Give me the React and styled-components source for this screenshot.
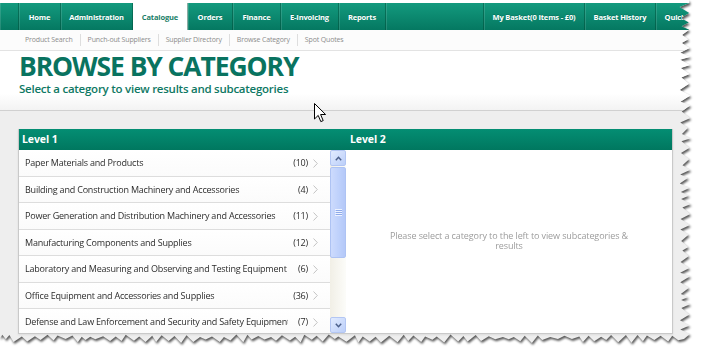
import React from 'react';
import styled, { createGlobalStyle } from 'styled-components';

const GlobalStyle = createGlobalStyle`
  html, body { margin: 0; padding: 0; background: #fff; overflow: hidden; }
  body { font-family: "Open Sans", "Noto Sans", sans-serif; }
  * { box-sizing: border-box; }
`;

function rng(seed) {
  let s = seed;
  return () => {
    s = (s * 16807) % 2147483647;
    return (s - 1) / 2147483646;
  };
}

const tornPath = (() => {
  const r = rng(11);
  const pts = ['0px 0px', '689px 0px'];
  let y = 0;
  let up = false;
  while (y < 330) {
    y += 3 + r() * 3.5;
    up = !up;
    const x = up ? 688 + r() * 3 : 679.5 + r() * 3;
    pts.push(`${x.toFixed(1)}px ${y.toFixed(1)}px`);
  }
  pts.push('684px 339px');
  let x = 684;
  while (x > 4) {
    x -= 3.5 + r() * 5;
    up = !up;
    const yy = up ? 334.5 + r() * 2.5 : 339 + r() * 4;
    pts.push(`${Math.max(x, 0).toFixed(1)}px ${yy.toFixed(1)}px`);
  }
  pts.push('0px 338px');
  return `polygon(${pts.join(',')})`;
})();

const Frame = styled.div`
  width: 701px;
  height: 357px;
  filter: drop-shadow(1.5px 2px 1.2px rgba(0, 0, 0, 0.65));
`;

const Page = styled.div`
  position: relative;
  width: 701px;
  height: 357px;
  background: #eeeeee;
  clip-path: ${tornPath};
  display: flex;
  flex-direction: column;
`;

const Top = styled.header`
  position: relative;
  height: 111px;
  background: linear-gradient(#ffffff 0%, #ffffff 85%, #f3f3f3 100%);
  padding-top: 3px;
  border-bottom: 1px solid #d0d0d0;
`;

const NavBar = styled.nav`
  display: flex;
  width: 716px;
  height: 27px;
  background: linear-gradient(#139a7e, #057861);
`;

const NavItem = styled.div`
  flex: ${(p) => (p.$grow ? '1 1 auto' : 'none')};
  width: ${(p) => p.$w}px;
  display: flex;
  align-items: center;
  justify-content: center;
  font-size: 7.5px;
  font-weight: 700;
  letter-spacing: -0.15px;
  white-space: nowrap;
  color: ${(p) => (p.$active ? '#1a7e67' : '#ffffff')};
  background: ${(p) => (p.$active ? '#ffffff' : 'transparent')};
  border-right: 1px solid rgba(0, 70, 52, 0.45);
  box-shadow: ${(p) => (p.$active ? 'none' : 'inset 1px 0 0 rgba(255,255,255,0.13)')};
  text-shadow: ${(p) => (p.$active ? 'none' : '0 -1px 0 rgba(0,0,0,0.15)')};
`;

const SubNav = styled.div`
  display: flex;
  align-items: center;
  height: 21px;
  padding-left: 18px;
  background: #fcfcfc;
  border-bottom: 1px solid #e3e3e3;
`;

const SubLink = styled.span`
  font-size: 7px;
  letter-spacing: -0.15px;
  color: #8c8c8c;
  padding: 0 7px;
  line-height: 12px;
  border-left: ${(p) => (p.$first ? 'none' : '1px solid #dedede')};
`;

const TitleBlock = styled.div`
  padding: 1px 0 0 19px;
`;

const Title = styled.h1`
  margin: 0;
  font-size: 26.5px;
  line-height: 28px;
  font-weight: 700;
  letter-spacing: -1.1px;
  color: #097360;
`;

const Subtitle = styled.p`
  margin: 2px 0 0;
  font-size: 11.5px;
  line-height: 14px;
  font-weight: 600;
  letter-spacing: -0.25px;
  color: #0e7863;
`;

const Cursor = styled.svg`
  position: absolute;
  left: 314px;
  top: 103px;
  z-index: 5;
`;

const Content = styled.main`
  padding: 18px 28px 0 18px;
`;

const Panel = styled.section`
  background: #fff;
  border: 1px solid #c9c9c9;
  border-top: none;
  box-shadow: 0 1px 2px rgba(0, 0, 0, 0.08);
  display: grid;
  grid-template-columns: 327px 1fr;
  grid-template-rows: 21px 183px;
`;

const HeadCell = styled.div`
  background: linear-gradient(#048e73, #00775f);
  color: #fff;
  font-size: 10.5px;
  font-weight: 700;
  line-height: 21px;
  padding-left: ${(p) => p.$pad}px;
  letter-spacing: -0.1px;
`;

const LeftBody = styled.div`
  display: flex;
  overflow: hidden;
`;

const List = styled.div`
  flex: 1;
  min-width: 0;
  overflow: hidden;
`;

const Row = styled.div`
  display: flex;
  align-items: center;
  height: 26.5px;
  padding-left: 6px;
  border-bottom: 1px solid #dddddd;
  background: linear-gradient(#ffffff, #fbfbfb);
  font-size: 9px;
  letter-spacing: -0.2px;
  color: #2c2c2c;
`;

const Name = styled.span`
  flex: 1;
  min-width: 0;
  overflow: hidden;
  white-space: nowrap;
`;

const Count = styled.span`
  flex: none;
  width: 20px;
  text-align: right;
`;

const Chevron = styled.svg`
  flex: none;
  margin: 1px 12px 0 5px;
`;

const Scroll = styled.div`
  flex: none;
  width: 16px;
  display: flex;
  flex-direction: column;
  background: linear-gradient(90deg, #f1efe6, #fcfcf9);
`;

const ScrollBtn = styled.div`
  height: 16px;
  display: flex;
  align-items: center;
  justify-content: center;
  border: 1px solid #b3c6f3;
  border-radius: 2px;
  background: linear-gradient(135deg, #e1ebff, #bccff9);
`;

const Thumb = styled.div`
  height: 91px;
  margin-top: 1px;
  display: flex;
  align-items: center;
  justify-content: center;
  border: 1px solid #aec3f3;
  border-radius: 2px;
  background: linear-gradient(90deg, #cddbfd, #bdd0fb 60%, #b4c8f8);
`;

const Grow = styled.div`
  flex: 1;
`;

const RightBody = styled.div`
  display: flex;
  align-items: center;
  justify-content: center;
  padding-bottom: 1px;
`;

const Message = styled.p`
  margin: 0;
  max-width: 250px;
  text-align: center;
  font-size: 9px;
  line-height: 10px;
  letter-spacing: -0.1px;
  color: #9c9c9c;
`;

const navItems = [
  { label: '', w: 19 },
  { label: 'Home', w: 42 },
  { label: 'Administration', w: 72 },
  { label: 'Catalogue', w: 55, active: true },
  { label: 'Orders', w: 45 },
  { label: 'Finance', w: 48 },
  { label: 'E-Invoicing', w: 58 },
  { label: 'Reports', w: 47 },
  { label: '', grow: true },
  { label: 'My Basket(0 Items - £0)', w: 101 },
  { label: 'Basket History', w: 71 },
  { label: 'Quick Links', w: 60 },
];

const subLinks = ['Product Search', 'Punch-out Suppliers', 'Supplier Directory', 'Browse Category', 'Spot Quotes'];

const categories = [
  ['Paper Materials and Products', 10],
  ['Building and Construction Machinery and Accessories', 4],
  ['Power Generation and Distribution Machinery and Accessories', 11],
  ['Manufacturing Components and Supplies', 12],
  ['Laboratory and Measuring and Observing and Testing Equipment', 6],
  ['Office Equipment and Accessories and Supplies', 36],
  ['Defense and Law Enforcement and Security and Safety Equipment', 7],
];

const Arrow = ({ up }) => (
  <svg width="7" height="5" viewBox="0 0 7 5">
    <polyline
      points={up ? '0.8,4.2 3.5,1.3 6.2,4.2' : '0.8,0.8 3.5,3.7 6.2,0.8'}
      fill="none"
      stroke="#4b5f8a"
      strokeWidth="1.5"
    />
  </svg>
);

export default function App() {
  return (
    <>
      <GlobalStyle />
      <Frame>
        <Page>
          <Top>
            <NavBar>
              {navItems.map((n, i) => (
                <NavItem key={i} $w={n.w} $grow={n.grow} $active={n.active}>
                  {n.label}
                </NavItem>
              ))}
            </NavBar>
            <SubNav>
              {subLinks.map((s, i) => (
                <SubLink key={s} $first={i === 0}>
                  {s}
                </SubLink>
              ))}
            </SubNav>
            <TitleBlock>
              <Title>BROWSE BY CATEGORY</Title>
              <Subtitle>Select a category to view results and subcategories</Subtitle>
            </TitleBlock>
            <Cursor width="13" height="20" viewBox="0 0 13 20">
              <path
                d="M0.5 0.5 L0.5 16 L4.2 12.4 L6.8 18.6 L9.2 17.6 L6.6 11.5 L11.6 11.5 Z"
                fill="#fff"
                stroke="#000"
                strokeWidth="1"
                strokeLinejoin="miter"
              />
            </Cursor>
          </Top>
          <Content>
            <Panel>
              <HeadCell $pad={3}>Level 1</HeadCell>
              <HeadCell $pad={4}>Level 2</HeadCell>
              <LeftBody>
                <List>
                  {categories.map(([name, count]) => (
                    <Row key={name}>
                      <Name>{name}</Name>
                      <Count>({count})</Count>
                      <Chevron width="5" height="9" viewBox="0 0 5 9">
                        <polyline points="0.5,0.5 4.3,4.5 0.5,8.5" fill="none" stroke="#c4c4c4" strokeWidth="1" />
                      </Chevron>
                    </Row>
                  ))}
                </List>
                <Scroll>
                  <ScrollBtn>
                    <Arrow up />
                  </ScrollBtn>
                  <Thumb>
                    <svg width="7" height="7" viewBox="0 0 7 7">
                      <g stroke="#eef3ff" strokeWidth="1">
                        <line x1="0" y1="0.5" x2="7" y2="0.5" />
                        <line x1="0" y1="2.5" x2="7" y2="2.5" />
                        <line x1="0" y1="4.5" x2="7" y2="4.5" />
                        <line x1="0" y1="6.5" x2="7" y2="6.5" />
                      </g>
                      <g stroke="#8eaaea" strokeWidth="1">
                        <line x1="1" y1="1.5" x2="7" y2="1.5" />
                        <line x1="1" y1="3.5" x2="7" y2="3.5" />
                        <line x1="1" y1="5.5" x2="7" y2="5.5" />
                      </g>
                    </svg>
                  </Thumb>
                  <Grow />
                  <ScrollBtn>
                    <Arrow />
                  </ScrollBtn>
                </Scroll>
              </LeftBody>
              <RightBody>
                <Message>Please select a category to the left to view subcategories &amp; results</Message>
              </RightBody>
            </Panel>
          </Content>
        </Page>
      </Frame>
    </>
  );
}
